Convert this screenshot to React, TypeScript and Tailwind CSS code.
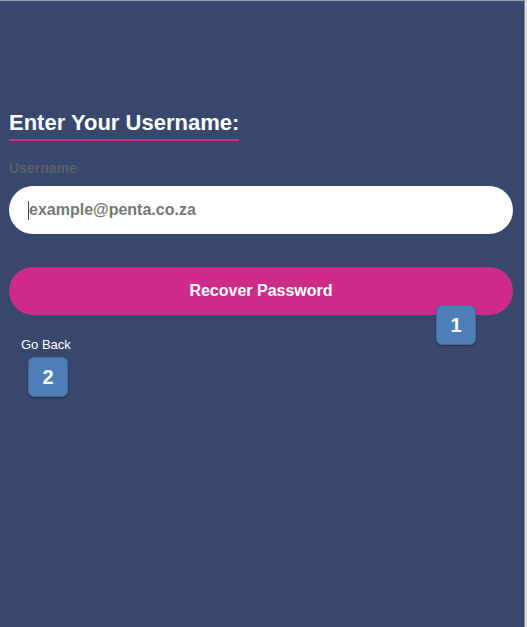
import React from "react";

const Marker = ({ n, className }: { n: number; className: string }) => (
  <div
    className={`absolute w-10 h-10 rounded-[6px] bg-[#4d80b9] border border-[#46699a] flex items-center justify-center text-white text-[20px] font-bold shadow-[0_1px_2px_rgba(0,0,0,0.35)] ${className}`}
  >
    {n}
  </div>
);

const App = () => {
  return (
    <div className="flex h-[627px] w-full font-['Liberation_Sans',Arial,sans-serif]">
      <main className="flex-1 bg-[#37476e] border-t border-[#9c9ea6] pl-[9px] pr-[11px] pt-[109px]">
        <h2 className="inline-block text-[22px] font-bold text-white border-b-2 border-[#cd2c8a] pb-[4px] leading-[1.15]">
          Enter Your Username:
        </h2>

        <label className="block mt-[19px] text-[14px] leading-[16px] font-bold text-[#5d5f68]">Username</label>

        <div className="mt-[10px] h-12 rounded-full bg-white flex items-center pl-[19px]">
          <span className="w-px h-[19px] bg-[#3a4a70]" />
          <span className="text-[16px] font-bold text-[#777777]">example@penta.co.za</span>
        </div>

        <div className="relative mt-[33px]">
          <button className="w-full h-12 rounded-full bg-[#cd2c8a] text-white text-[16px] font-bold">
            Recover Password
          </button>
          <Marker n={1} className="left-[427px] top-[38px]" />
        </div>

        <div className="relative mt-[17px]">
          <button className="px-3 text-[13px] text-white">Go Back</button>
          <Marker n={2} className="left-[19px] top-[25px]" />
        </div>
      </main>
      <div className="w-px bg-[#8d8d8d]" />
      <div className="w-[2px] bg-[#dcdcdc]" />
    </div>
  );
};

export default App;
